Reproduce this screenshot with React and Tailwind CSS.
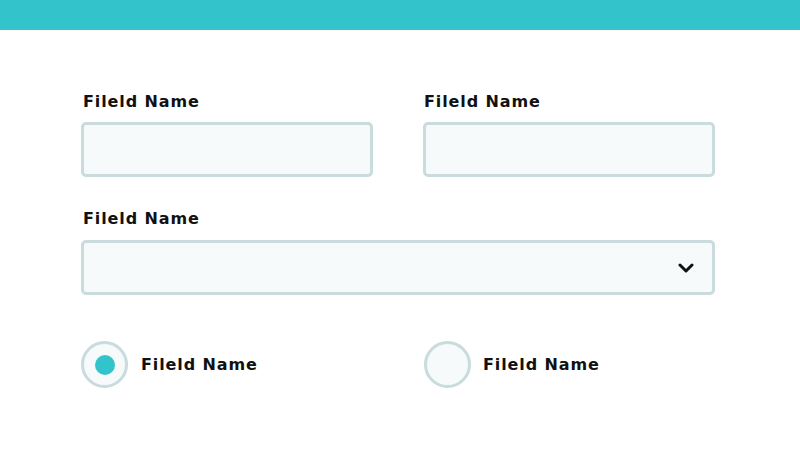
export default function App() {
  const font = { fontFamily: '"DejaVu Sans", "Noto Sans", sans-serif' };
  const label = "text-[16px] font-bold text-[#111] leading-[20px] tracking-[0.9px]";
  const box = "h-[55px] rounded-[5px] border-[3px] border-[#c9dbdc] bg-[#f6fafb]";
  return (
    <div className="w-[800px] h-[450px] bg-white" style={font}>
      <div className="h-[30px] bg-[#33c4cb]" />
      <div className="pl-[81px] pt-[62px] w-[715px]">
        <div className="grid grid-cols-2 gap-x-[50px]">
          <div className="flex flex-col gap-[10px]">
            <div className={label + " pl-[2px]"}>Fileld Name</div>
            <div className={box} />
          </div>
          <div className="flex flex-col gap-[10px]">
            <div className={label + " pl-[1px]"}>Fileld Name</div>
            <div className={box} />
          </div>
        </div>
        <div className="mt-[32px] flex flex-col gap-[11px]">
          <div className={label + " pl-[2px]"}>Fileld Name</div>
          <div className={box + " flex items-center justify-end pr-[18px]"}>
            <svg width="16" height="10" viewBox="0 0 16 10" fill="none">
              <path d="M2 2l6 6 6-6" stroke="#111" strokeWidth="3" strokeLinecap="round" strokeLinejoin="round" />
            </svg>
          </div>
        </div>
        <div className="mt-[46px] grid grid-cols-2 gap-x-[50px]">
          <div className="flex items-center gap-[13px]">
            <div className="w-[47px] h-[47px] rounded-full border-[3px] border-[#c9dbdc] bg-[#f6fafb] flex items-center justify-center">
              <div className="w-[20px] h-[20px] rounded-full bg-[#33c4cb]" />
            </div>
            <div className={label}>Fileld Name</div>
          </div>
          <div className="flex items-center gap-[12px] pl-[1px]">
            <div className="w-[47px] h-[47px] rounded-full border-[3px] border-[#c9dbdc] bg-[#f6fafb]" />
            <div className={label}>Fileld Name</div>
          </div>
        </div>
      </div>
    </div>
  );
}
